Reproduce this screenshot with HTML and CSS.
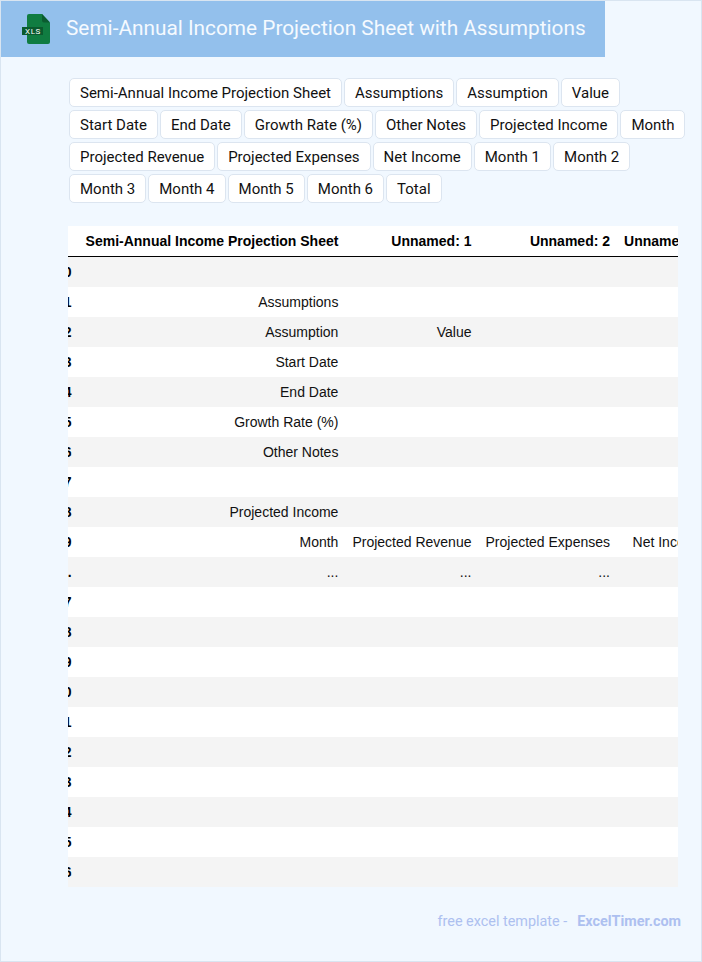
FILE: index.html
```html
<!DOCTYPE html>
<html lang="en">
<head>
<meta charset="utf-8">
<title>Semi-Annual Income Projection Sheet with Assumptions</title>
<link rel="stylesheet" href="styles.css">
</head>
<body>
<div class="page">
  <header class="banner">
    <svg class="logo" width="32" height="32" viewBox="0 0 32 32" aria-hidden="true">
      <path fill="#107c41" d="M8 1H21l8 8.5V29a2 2 0 0 1-2 2H8a2 2 0 0 1-2-2V3a2 2 0 0 1 2-2z"/>
      <path fill="#0b5c30" d="M21 1l8 8.5H23a2 2 0 0 1-2-2z"/>
      <rect x="1" y="14" width="21" height="8" fill="#0a5a2e"/>
      <text x="12" y="20.8" class="logo-text" text-anchor="middle">XLS</text>
    </svg>
    <h1 class="title">Semi-Annual Income Projection Sheet with Assumptions</h1>
  </header>
  <div class="tags">
    <span class="tag">Semi-Annual Income Projection Sheet</span>
    <span class="tag">Assumptions</span>
    <span class="tag">Assumption</span>
    <span class="tag">Value</span>
    <span class="tag">Start Date</span>
    <span class="tag">End Date</span>
    <span class="tag">Growth Rate (%)</span>
    <span class="tag">Other Notes</span>
    <span class="tag">Projected Income</span>
    <span class="tag">Month</span>
    <span class="tag">Projected Revenue</span>
    <span class="tag">Projected Expenses</span>
    <span class="tag">Net Income</span>
    <span class="tag">Month 1</span>
    <span class="tag">Month 2</span>
    <span class="tag">Month 3</span>
    <span class="tag">Month 4</span>
    <span class="tag">Month 5</span>
    <span class="tag">Month 6</span>
    <span class="tag">Total</span>
  </div>
  <div class="table-wrap">
    <table class="sheet">
      <thead>
        <tr><th></th><th>Semi-Annual Income Projection Sheet</th><th>Unnamed: 1</th><th>Unnamed: 2</th><th>Unnamed: 3</th></tr>
      </thead>
      <tbody>
        <tr><th>0</th><td></td><td></td><td></td><td></td></tr>
        <tr><th>1</th><td>Assumptions</td><td></td><td></td><td></td></tr>
        <tr><th>2</th><td>Assumption</td><td>Value</td><td></td><td></td></tr>
        <tr><th>3</th><td>Start Date</td><td></td><td></td><td></td></tr>
        <tr><th>4</th><td>End Date</td><td></td><td></td><td></td></tr>
        <tr><th>5</th><td>Growth Rate (%)</td><td></td><td></td><td></td></tr>
        <tr><th>6</th><td>Other Notes</td><td></td><td></td><td></td></tr>
        <tr><th>7</th><td></td><td></td><td></td><td></td></tr>
        <tr><th>8</th><td>Projected Income</td><td></td><td></td><td></td></tr>
        <tr><th>9</th><td>Month</td><td>Projected Revenue</td><td>Projected Expenses</td><td>Net Income</td></tr>
        <tr><th>...</th><td>...</td><td>...</td><td>...</td><td>...</td></tr>
        <tr><th>17</th><td></td><td></td><td></td><td></td></tr>
        <tr><th>18</th><td></td><td></td><td></td><td></td></tr>
        <tr><th>19</th><td></td><td></td><td></td><td></td></tr>
        <tr><th>20</th><td></td><td></td><td></td><td></td></tr>
        <tr><th>21</th><td></td><td></td><td></td><td></td></tr>
        <tr><th>22</th><td></td><td></td><td></td><td></td></tr>
        <tr><th>23</th><td></td><td></td><td></td><td></td></tr>
        <tr><th>24</th><td></td><td></td><td></td><td></td></tr>
        <tr><th>25</th><td></td><td></td><td></td><td></td></tr>
        <tr><th>26</th><td></td><td></td><td></td><td></td></tr>
      </tbody>
    </table>
  </div>
  <footer class="foot">
    <span class="foot-text">free excel template -</span>
    <span class="foot-brand">ExcelTimer.com</span>
  </footer>
</div>
</body>
</html>
```

FILE: styles.css
```css
* { box-sizing: border-box; }
html, body { margin: 0; padding: 0; }
body { background: #f1f8ff; }
.page {
  width: 702px;
  height: 962px;
  border: 1px solid #d9e5f1;
  background: #f1f8ff;
  overflow: hidden;
  font-family: Roboto, sans-serif;
}
.banner {
  width: 604px;
  height: 56px;
  background: #93c0ec;
  display: flex;
  align-items: center;
  padding-left: 20px;
}
.logo { flex: none; }
.title {
  margin: -2px 0 0 13px;
  font-size: 20.8px;
  font-weight: 400;
  color: #f5faff;
  white-space: nowrap;
}
.tags {
  display: flex;
  flex-wrap: wrap;
  gap: 3px 2px;
  margin: 21px 0 0 68px;
  width: 620px;
}
.tag {
  height: 29px;
  padding: 0 10px;
  border: 1px solid #dce5f0;
  border-radius: 5px;
  background: #fff;
  color: #111;
  font-size: 15px;
  line-height: 28px;
  white-space: nowrap;
}
.table-wrap {
  width: 610px;
  margin: 23px 0 0 67px;
  overflow: hidden;
}
.sheet {
  border-collapse: separate;
  border-spacing: 0;
  table-layout: auto;
  margin-left: -19px;
  background: #fff;
  font-family: "Liberation Sans", Arial, sans-serif;
  font-size: 14px;
  color: #111;
  white-space: nowrap;
}
.sheet th, .sheet td {
  padding: 0 7px;
  height: 30px;
  text-align: right;
  font-weight: 400;
}
.sheet thead th {
  height: 31px;
  font-weight: 700;
  color: #000;
  border-bottom: 1px solid #000;
}
.sheet tbody th { font-weight: 700; color: #000; }
.sheet tbody tr:nth-child(odd) { background: #f4f4f4; }
.foot {
  display: flex;
  justify-content: flex-end;
  gap: 10px;
  margin: 26px 20px 0 0;
  font-size: 14.4px;
  color: #adc0f0;
}
.foot-brand { font-weight: 700; }
.logo-text {
  font-family: Roboto, sans-serif;
  font-size: 8px;
  font-weight: 400;
  fill: #fff;
  letter-spacing: 0.6px;
}
```
